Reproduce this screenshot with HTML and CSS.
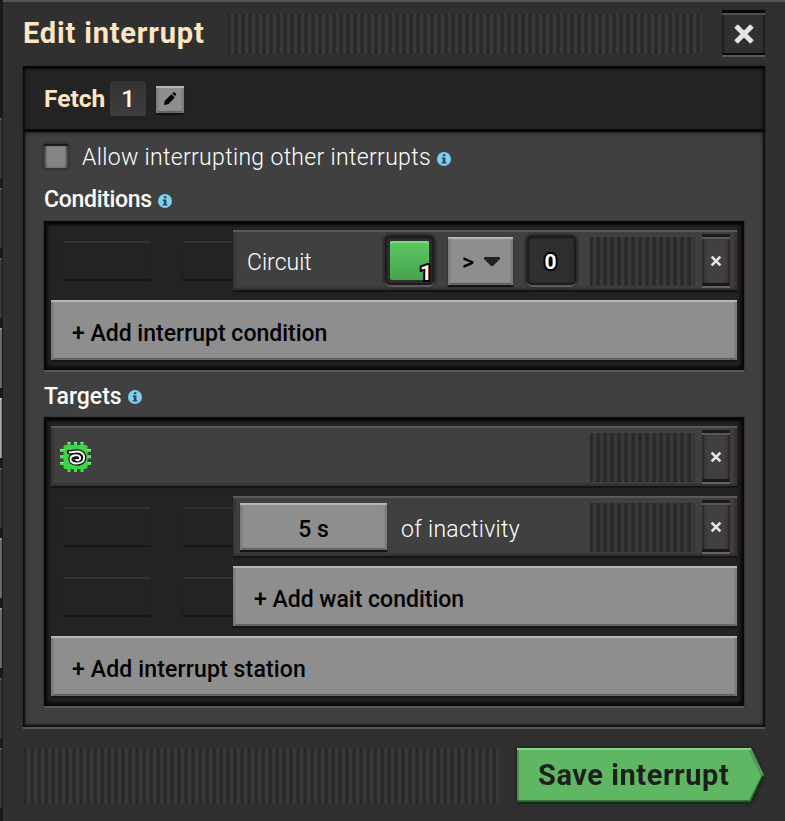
FILE: index.html
```html
<!DOCTYPE html>
<html lang="en">
<head>
<meta charset="utf-8">
<title>Edit interrupt</title>
<link rel="stylesheet" href="styles.css">
</head>
<body>
<svg class="defs" width="0" height="0" aria-hidden="true">
  <symbol id="info" viewBox="0 0 14 14"><circle cx="7" cy="7" r="7" fill="#7dcff3"/><path d="M5.800 2.300h2.600v2H5.800zM4.800 5.500h3.600v4.700h1v1.400H4.600v-1.400h1.200V7h-1z" fill="#35464f"/></symbol>
  <symbol id="cross" viewBox="0 0 22 22"><path d="M3 3l16 16M19 3L3 19" stroke="#e4e4e4" stroke-width="5"/></symbol>
</svg>
<div class="behind"><i></i><i></i><i></i><i class="mid"></i><i class="lit"></i><i></i><i class="mid"></i><i class="mid"></i><i></i><i></i></div>
<main class="window">
  <header class="titlebar">
    <h1><span class="t-title">Edit interrupt</span></h1>
    <div class="grip"></div>
    <button class="close"><svg width="22" height="22"><use href="#cross"/></svg></button>
  </header>
  <section class="panel">
    <div class="namebar">
      <span class="t-fetch">Fetch</span>
      <span class="badge">1</span>
      <button class="edit"><svg width="14" height="14" viewBox="0 0 14 14"><path d="M1 13l.8-4.200L8.500 2.200l3.300 3.300L5.200 12.200zM9.300 1.500l.9-.9q1-.8 2.200.3t.4 2.400l-.8.8z"/></svg></button>
    </div>
    <div class="content">
      <div class="allow"><span class="check"></span><span class="t-allow">Allow interrupting other interrupts</span><svg class="info" width="14" height="14"><use href="#info"/></svg></div>
      <h2><span class="t-cond">Conditions</span><svg class="info" width="14" height="14"><use href="#info"/></svg></h2>
      <div class="frame">
        <div class="line">
          <div class="slots"><i></i><i></i></div>
          <div class="row">
            <span class="t-circuit">Circuit</span>
            <div class="slot"><div class="signal"><b>1</b></div></div>
            <div class="select"><span class="gt">&gt;</span><svg width="16" height="10" viewBox="0 0 16 10"><path d="M0 1q0-1 1-1h14q1 0 1 1v1L9.500 8.500q-1.500 1-3 0L0 2z" fill="#222"/></svg></div>
            <div class="slot zero"><b>0</b></div>
            <div class="grip small"></div>
            <button class="del"><svg width="12" height="12"><use href="#cross"/></svg></button>
          </div>
        </div>
        <button class="add"><span class="t-a1">+ Add interrupt condition</span></button>
      </div>
      <h2 class="targets"><span class="t-targ">Targets</span><svg class="info" width="14" height="14"><use href="#info"/></svg></h2>
      <div class="frame">
        <div class="row station">
          <svg class="chip" width="32" height="32" viewBox="0 0 32 32">
            <path d="M9 1v30M15.500 1v30M22 1v30M0 9.500h31M0 16h31M0 22.500h31" stroke="#43e04a" stroke-width="3"/>
            <path d="M7.500 1.500h3M14 1.500h3M20.500 1.500h3M0 8.500h4M0 15h4M0 21.500h4M27 8.500h4M27 15h4M27 21.500h4" stroke="#a5eaa5" stroke-width="1"/>
            <rect x="3.500" y="4" width="24" height="24" rx="2" fill="#3ed545"/>
            <path d="M9 11C11 12 13 10.500 17 10.500C22 10.500 24.500 13.500 24.200 17C24 21 20 22.500 16.500 22.500C12 22.500 10 20 10.500 17.500C11 15 14 14 17 14.200C20 14.500 21 17 19.500 18.500C18 19.800 15.500 19 15.500 18" fill="none" stroke="#071007" stroke-width="4.400" stroke-linecap="round"/>
            <path d="M9 11C11 12 13 10.500 17 10.500C22 10.500 24.500 13.500 24.200 17C24 21 20 22.500 16.500 22.500C12 22.500 10 20 10.500 17.500C11 15 14 14 17 14.200C20 14.500 21 17 19.500 18.500C18 19.800 15.500 19 15.500 18" fill="none" stroke="#fff" stroke-width="2"/>
          </svg>
          <div class="grip small"></div>
          <button class="del"><svg width="12" height="12"><use href="#cross"/></svg></button>
        </div>
        <div class="line">
          <div class="slots"><i></i><i></i></div>
          <div class="row wait">
            <button class="time"><span class="t-5s">5 s</span></button>
            <span class="t-inact">of inactivity</span>
            <div class="grip small"></div>
            <button class="del"><svg width="12" height="12"><use href="#cross"/></svg></button>
          </div>
        </div>
        <div class="line">
          <div class="slots"><i></i><i></i></div>
          <button class="add"><span class="t-a2">+ Add wait condition</span></button>
        </div>
        <button class="add"><span class="t-a3">+ Add interrupt station</span></button>
      </div>
    </div>
  </section>
  <footer>
    <div class="grip tall"></div>
    <button class="save">
      <svg width="247" height="56" viewBox="0 0 247 56" aria-hidden="true">
        <path d="M0 0h234l13 27-13 28H0z" fill="#5fb663"/>
        <path d="M0 1h234" fill="none" stroke="#88d58c" stroke-width="2"/>
        <path d="M233 2l12 25" fill="none" stroke="#519a55" stroke-width="3"/>
        <path d="M1 2v52" stroke="#4a8e4e" stroke-width="2"/>
        <path d="M0 53h233l13-26" fill="none" stroke="#347038" stroke-width="2"/>
        <path d="M0 54.500h234l12-26" fill="none" stroke="#0e2e12" stroke-width="1.500"/>
      </svg>
      <span class="t-save">Save interrupt</span>
    </button>
  </footer>
</main>
</body>
</html>
```
FILE: styles.css
```css
* { box-sizing: border-box; }
body { margin: 0; width: 785px; height: 821px; overflow: hidden; display: flex; background: #1c1a1a; font-family: Roboto, "Liberation Sans", sans-serif; font-size: 23px; color: #fff; }
button { font: inherit; border: 0; padding: 0; margin: 0; display: flex; align-items: center; justify-content: center; }
h1, h2 { margin: 0; font-size: inherit; }
span { white-space: nowrap; }
.defs { position: absolute; }

.behind { width: 3px; padding-top: 118px; display: flex; flex-direction: column; gap: 10px; flex: none; }
.behind i { height: 60px; background: #3a3a3a; border-top: 2px solid #5a5a5a; flex: none; }
.behind .lit { background: #a2a2a2; border-color: #c8c8c8; }
.behind .mid { background: #707070; border-color: #999; }

.window { width: 782px; height: 821px; flex: none; background: #313031; box-shadow: inset 0 2px #555451, inset 1px 0 #372d2b, inset -1px 0 #3a2c2b, 0 0 1px 1px #221818; padding: 10px 18px 0 20px; }
.titlebar { display: flex; height: 56px; padding-top: 1px; align-items: flex-start; }
h1 { width: 204px; padding: 4px 0 0 0; line-height: 36px; color: #ffe6c0; font-size: 29px; }
.t-title { letter-spacing: .82px; }
.grip { width: 476px; height: 42px; margin-top: 2px; border: 1px solid #342d2c; background: repeating-linear-gradient(90deg, #292929 0 2px, #2d2d2d 2px 3px, #393939 3px 6px, #303030 6px 7px); }
.close { width: 43px; height: 47px; margin: -1px 0 0 19px; background: #313031; border-top: 3px solid #090909; border-bottom: 2px solid #5d5a56; box-shadow: inset 0 2px #52504e, inset 0 -2px #090909, inset 2px 0 2px #241d1b, inset -2px 0 2px #241d1b; }

.panel { width: 742px; height: 661px; background: #404040; box-shadow: 0 2px #575653, -1px 0 #332a28, 1px 0 #332a28; position: relative; }
.panel::after { content: ""; position: absolute; inset: 0; pointer-events: none; box-shadow: inset 0 3px 2px #050505, inset 2px 0 3px #0c0c0c, inset -2px 0 3px #0c0c0c, inset 0 -2px 3px #0c0c0c; }
.namebar { height: 66px; padding: 3px 0 0 21px; display: flex; align-items: center; background: #242324; border-bottom: 3px solid #080808; box-shadow: 0 1px 3px #222; }
.t-fetch { width: 66px; margin-top: -2px; font-weight: 700; font-size: 24.5px; color: #ffe6c0; }
.badge { width: 36px; height: 35px; margin-top: -1px; border-radius: 3px; background: linear-gradient(#343334, #3f3d3e); font-weight: 500; text-align: center; line-height: 36px; font-size: 24px; }
.edit { width: 28px; height: 27px; margin-left: 10px; }
.edit, .add, .time, .select { background: #8e8e8e; box-shadow: inset 0 2px 1px #b9b7b8, inset 2px 0 2px #777, inset -2px 0 2px #757575, inset 0 -2px 1px #5a5a5a, 0 2px 1px #151313; color: #000; }
.content { padding: 12px 21px 0; }
.allow { height: 24px; display: flex; align-items: center; font-weight: 300; }
.t-allow { letter-spacing: .33px; padding-top: 3px; }
.check { width: 24px; height: 24px; margin-right: 14px; background: #858585; box-shadow: inset 0 2px 1px #171515, inset 2px 0 2px #4a4a4a, inset -2px 0 2px #4a4a4a, inset 0 -1px #a09c98, 0 0 2px 1px #382e2d; }
.info { margin-left: 6px; margin-top: 5px; }
h2 { height: 53px; padding-top: 10px; display: flex; align-items: center; font-weight: 500; }
.t-cond { letter-spacing: -.3px; }
h2 .info { margin-top: 2px; }
h2.targets { height: 47px; padding-top: 5px; }

.frame { width: 700px; padding: 9px 7px 10px; background: #242324; display: flex; flex-direction: column; gap: 10px; box-shadow: inset 0 4px 3px #080808, inset 3px 0 4px #080808, inset -3px 0 4px #080808, inset 0 -3px 4px #080808, 0 2px #5b5855, -1px 0 1px #3a302e, 1px 0 1px #3a302e; }
.line { display: flex; height: 60px; }
.slots { width: 182px; padding: 11px 0 0 13px; display: flex; gap: 33px; flex: none; overflow: hidden; }
.slots i { width: 86px; height: 40px; flex: none; border-top: 2px solid #323232; border-bottom: 2px solid #181818; box-shadow: -1px 0 #1f1f1f, 1px 0 #1f1f1f; }
.row { flex: 1; height: 60px; display: flex; align-items: center; background: #404040; box-shadow: inset 0 2px 1px #5f5a59, inset 2px 0 2px #3b302e, inset -3px 0 3px #3b302e, inset 0 -2px 2px #392e2c, 0 2px 1px #151515; }
.station { flex: none; width: 686px; }
.t-circuit { width: 152px; padding: 5px 0 0 14px; font-weight: 300; }
.slot { width: 49px; height: 49px; margin-top: 1px; border-radius: 5px; background: #2f2f2f; box-shadow: 0 2px 1px #615d5a, 0 0 2px 2px #2b2424, inset 0 0 2px 2px #1b1b1b; padding: 5px; position: relative; }
.signal { width: 39px; height: 39px; border-radius: 2px; background: linear-gradient(#5bca61, #48a14e); box-shadow: inset 0 2px 1px #80da84; }
.slot b { font-size: 21px; color: #fff; line-height: 1; -webkit-text-stroke: 4px #000; paint-order: stroke fill; }
.signal b { position: absolute; right: 2px; bottom: 1px; }
.select { width: 65px; height: 48px; margin: 1px 14px 0; display: flex; align-items: center; padding: 3px 0 0 14px; gap: 10px; }
.gt { font-weight: 500; font-size: 23px; }
.zero { display: flex; align-items: center; justify-content: center; padding: 4px 2px 0 0; }
.grip.small { width: 105px; height: 49px; margin: 2px 0 0 14px; border: 0; }
.station .grip.small, .wait .grip.small { margin-left: auto; }
.del { width: 28px; height: 54px; margin: 2px 7px 0; background: #404040; border-top: 3px solid #1b1a1a; border-bottom: 2px solid #67635f; box-shadow: inset 0 2px #5b5957, inset 0 -3px #191818, inset 2px 0 3px #30221e, inset -2px 0 3px #30221e; }
.del svg { margin-bottom: 2px; }
.add { width: 100%; height: 60px; justify-content: flex-start; padding: 6px 0 0 21px; font-weight: 500; flex: none; }
.t-a3 { letter-spacing: .14px; }
.line .add { width: 504px; }
.chip { margin: 2px 0 0 9px; }
.time { width: 147px; height: 47px; margin: 1px 14px 0 7px; font-weight: 500; padding-top: 5px; }
.t-inact { font-weight: 300; padding-top: 6px; letter-spacing: .28px; }

footer { display: flex; padding-top: 21px; }
.grip.tall { width: 477px; height: 56px; margin-top: 0; }
.save { width: 247px; height: 56px; margin-left: 17px; background: none; position: relative; color: #1d1f1d; font-weight: 700; font-size: 29px; justify-content: flex-start; padding: 0 0 2px 21px; filter: drop-shadow(0 0 2px #1b1818); }
.save svg { position: absolute; left: 0; top: 0; }
.save span { position: relative; letter-spacing: .55px; }
```
